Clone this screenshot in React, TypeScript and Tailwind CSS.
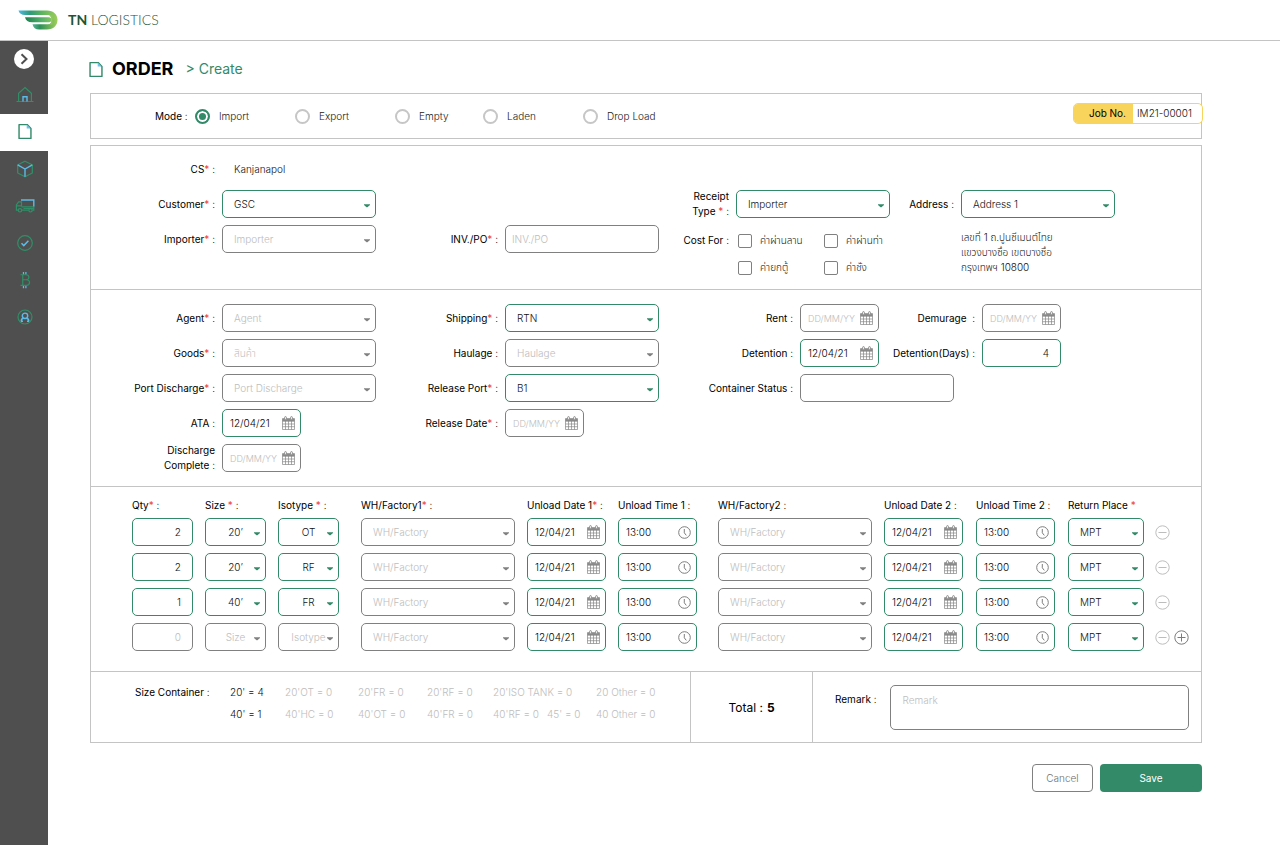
import { useId, type ReactNode } from "react";
import clsx from "clsx";

const filledBorder = "border-[#338a68]";
const emptyBorder = "border-[#808080]";

function Caret({ filled }: { filled: boolean }) {
  return (
    <svg
      viewBox="0 0 6 4"
      className={clsx(
        "pointer-events-none absolute top-[14px] right-[6px] h-1 w-1.5",
        filled ? "fill-[#338a68]" : "fill-[#808080]",
      )}
      aria-hidden="true"
    >
      <path d="M0 0.200h6v0.700L3.400 3.200h-0.800L0 0.900z" />
    </svg>
  );
}

type SelectBoxProps = { id?: string; label?: string; value?: string; placeholder?: string; centered?: boolean };

function SelectBox({ id, label, value, placeholder, centered }: SelectBoxProps) {
  const filled = value !== undefined;
  return (
    <div className="relative w-full">
      <select
        id={id}
        aria-label={label}
        className={clsx(
          "block h-7 w-full appearance-none rounded-[5px] border bg-white",
          centered ? "[text-align-last:center]" : "pr-5 pl-[11px]",
          filled ? filledBorder : emptyBorder,
          filled ? "text-[#111]" : "text-[#bdbdbd]",
        )}
      >
        <option>{value ?? placeholder}</option>
      </select>
      <Caret filled={filled} />
    </div>
  );
}

function CalendarIcon() {
  return (
    <svg viewBox="0 0 13 14" className="h-3.5 w-[13px] shrink-0" fill="none" stroke="#858585" aria-hidden="true">
      <path d="M0.500 2.200h12v3h-12z" fill="#8c8c8c" stroke="none" />
      <path d="M0.500 2.500v11h12v-11" strokeWidth="0.700" />
      <path d="M0.500 5.200h12M0.500 8h12M0.500 10.700h12M3.500 5v8.500M6.500 5v8.500M9.500 5v8.500" strokeWidth="0.700" />
      <rect x="2.600" y="0.600" width="1.800" height="3.200" rx="0.900" fill="#fff" strokeWidth="0.900" />
      <rect x="8.600" y="0.600" width="1.800" height="3.200" rx="0.900" fill="#fff" strokeWidth="0.900" />
    </svg>
  );
}

function ClockIcon() {
  return (
    <svg viewBox="0 0 13 13" className="size-[13px] shrink-0" fill="none" stroke="#7d7d7d" aria-hidden="true">
      <circle cx="6.500" cy="6.500" r="5.800" strokeWidth="1" />
      <path d="M6.300 3v3.800l2 2.600" strokeWidth="1" />
    </svg>
  );
}

function IconBox({ id, label, value, icon }: { id?: string; label?: string; value?: string; icon: "date" | "time" }) {
  return (
    <div
      className={clsx(
        "flex h-7 w-[79px] items-center rounded-[5px] border bg-white pr-[5px] pl-[7px]",
        value ? filledBorder : emptyBorder,
      )}
    >
      <input
        id={id}
        aria-label={label}
        defaultValue={value}
        placeholder={icon === "date" ? "DD/MM/YY" : "00:00"}
        className="w-full min-w-0 flex-1 text-black outline-none placeholder:text-[9px] placeholder:text-[#bdbdbd]"
      />
      {icon === "date" ? <CalendarIcon /> : <ClockIcon />}
    </div>
  );
}

type TextBoxProps = { id?: string; label?: string; value?: string; placeholder?: string; numeric?: boolean };

function TextBox({ id, label, value, placeholder, numeric }: TextBoxProps) {
  return (
    <input
      id={id}
      aria-label={label}
      defaultValue={value}
      placeholder={placeholder}
      className={clsx(
        "block h-7 w-full rounded-[5px] border bg-white text-[#111] outline-none placeholder:text-[#bdbdbd]",
        value ? filledBorder : emptyBorder,
        numeric ? "px-[11px] text-right" : "px-1.5",
      )}
    />
  );
}

function Star() {
  return <span className="text-[#f04040]">*</span>;
}

function LabelText({ children, required, spaced }: { children: ReactNode; required?: boolean; spaced?: boolean }) {
  return (
    <>
      {children}
      {spaced && "\u00a0"}
      {required && <Star />}
      <span className="font-light"> :</span>
    </>
  );
}

type FieldProps = {
  label: ReactNode;
  required?: boolean;
  short?: boolean;
  render: (id: string) => ReactNode;
};

function Field({ label, required, render }: FieldProps) {
  const id = useId();
  return (
    <div className="flex h-7 items-center gap-[7px]">
      <label htmlFor={id} className="flex-1 text-right font-normal whitespace-nowrap">
        <LabelText required={required}>{label}</LabelText>
      </label>
      <div className="w-[154px] shrink-0">{render(id)}</div>
    </div>
  );
}

function PairLabel({ id, children, required, spaced }: { id: string; children: ReactNode; required?: boolean; spaced?: boolean }) {
  return (
    <label htmlFor={id} className="text-right font-normal">
      <LabelText required={required} spaced={spaced}>{children}</LabelText>
    </label>
  );
}

function Logo() {
  return (
    <svg viewBox="0 0 40 20" className="h-5 w-10" aria-hidden="true">
      <defs>
        <linearGradient id="logoTop" gradientUnits="userSpaceOnUse" x1="0" y1="0" x2="40" y2="0">
          <stop offset="0" stopColor="#4fb9e8" />
          <stop offset="0.300" stopColor="#2f9a78" />
          <stop offset="0.600" stopColor="#5cb45e" />
          <stop offset="1" stopColor="#9fce5a" />
        </linearGradient>
        <linearGradient id="logoMid" gradientUnits="userSpaceOnUse" x1="7" y1="0" x2="40" y2="0">
          <stop offset="0" stopColor="#1c7f4e" />
          <stop offset="0.500" stopColor="#53b06a" />
          <stop offset="1" stopColor="#a5d05c" />
        </linearGradient>
        <linearGradient id="logoLow" gradientUnits="userSpaceOnUse" x1="14" y1="0" x2="40" y2="0">
          <stop offset="0" stopColor="#58b7a0" />
          <stop offset="0.300" stopColor="#2c8f58" />
          <stop offset="1" stopColor="#a5d05c" />
        </linearGradient>
      </defs>
      <path
        d="M0.500 0.500H29C35.500 0.500 39.500 4.500 39.500 10H33.500C33.500 6.500 32.500 5 30 5H7C3.500 5 1.200 3.300 0.500 0.500z"
        fill="url(#logoTop)"
      />
      <path d="M7 7.200H31c3 0 3.400 5 0 5H14C10.200 12.200 7.700 10.400 7 7.200z" fill="url(#logoMid)" />
      <path
        d="M14.500 14.300H30C32.500 14.300 33.500 13 33.500 9.800H39.500C39.500 15.500 35.500 19.500 29 19.500H21C17.500 19.500 15.200 17.800 14.500 14.300z"
        fill="url(#logoLow)"
      />
      <path d="M31 5.200c3 1 3.600 8 0 9.200h3.500V5.200z" fill="#92c85b" />
    </svg>
  );
}

function DocIcon() {
  return (
    <svg viewBox="0 0 16 18" className="h-[17px] w-4" fill="none" aria-hidden="true">
      <path d="M1.700 1.700h8.600l4 4v10.600H1.700z" stroke="#338a68" strokeWidth="1.500" strokeLinejoin="round" />
      <path d="M9.800 1.700v4h4.200z" fill="#6cc4ee" />
    </svg>
  );
}

const G = "#2f9068";
const B = "#5bbce8";

function HomeIcon() {
  return (
    <svg viewBox="0 0 18 18" className="size-[18px]" fill="none" stroke={G} strokeWidth="1.200" aria-hidden="true">
      <path d="M0.500 15.500h17M2.600 15.500V7.200L9 1.600l6.400 5.600v8.300" />
      <path d="M7 15.500v-4.700h4v4.700" stroke={B} strokeWidth="1.400" />
    </svg>
  );
}

function BoxIcon() {
  return (
    <svg viewBox="0 0 18 18" className="size-[18px]" fill="none" stroke={G} strokeWidth="1.200" aria-hidden="true">
      <path d="M9 1.200l7.300 3.600v8.200L9 16.800l-7.300-3.800V4.800z" />
      <path d="M1.700 4.800L9 9l7.300-4.200M9 9v7.800" stroke={B} strokeWidth="1.400" />
    </svg>
  );
}

function TruckIcon() {
  return (
    <svg viewBox="0 0 20 14" className="h-3.5 w-5" fill="none" stroke={G} strokeWidth="1.200" aria-hidden="true">
      <path d="M6.500 7.500V2.800H3.600L1.400 6v5.200h1.800M6.600 11.200h7M17.400 11.200h1.400V7.800H6.500M1.400 6.800h5M8.500 9.500h10" />
      <path d="M6 1h12.800v6.500" stroke={B} strokeWidth="1.400" />
      <circle cx="5" cy="11.300" r="1.700" />
      <circle cx="15.500" cy="11.300" r="1.700" />
    </svg>
  );
}

function CheckIcon() {
  return (
    <svg viewBox="0 0 18 18" className="size-[18px]" fill="none" stroke={G} strokeWidth="1.200" aria-hidden="true">
      <circle cx="9" cy="9" r="7.300" />
      <path d="M5.500 9.300l2.300 2.300 4.600-4.800" stroke={B} strokeWidth="1.500" />
    </svg>
  );
}

function CoinIcon() {
  return (
    <svg viewBox="0 0 14 20" className="h-[18px] w-3.5" fill="none" stroke={G} strokeWidth="1.300" aria-hidden="true">
      <path d="M2 4.200h6.300c4 0 4 5.500 0 5.500H4.500M8.500 9.700c4.800 0 4.600 6.300 0 6.300H2M4.500 4.200V16" />
      <path d="M5.300 1v2.600M8 1v2.600M5.300 16.600v2.600M8 16.600v2.600" stroke={B} strokeWidth="1.400" />
    </svg>
  );
}

function UserIcon() {
  return (
    <svg viewBox="0 0 18 18" className="size-[18px]" fill="none" stroke={G} strokeWidth="1.200" aria-hidden="true">
      <circle cx="9" cy="9" r="7" />
      <circle cx="9" cy="7.800" r="2.700" stroke={B} strokeWidth="1.400" />
      <path d="M5.200 13.200c0-1.800 1-2.700 2.300-2.900M12.800 13.200c0-1.800-1-2.700-2.300-2.900M5 13.200h2M11 13.200h2" stroke={B} strokeWidth="1.400" />
    </svg>
  );
}

const nav = [
  { name: "Home", icon: <HomeIcon /> },
  { name: "Order", icon: <DocIcon />, active: true },
  { name: "Products", icon: <BoxIcon /> },
  { name: "Transport", icon: <TruckIcon /> },
  { name: "Approve", icon: <CheckIcon /> },
  { name: "Billing", icon: <CoinIcon /> },
  { name: "Account", icon: <UserIcon /> },
];

function Sidebar() {
  return (
    <nav className="flex w-12 shrink-0 flex-col bg-[#4f4f4f]">
      <div className="flex h-9 items-center justify-center">
        <button type="button" aria-label="Expand menu" className="flex size-5 items-center justify-center rounded-full bg-white">
          <svg viewBox="0 0 20 20" className="size-5" fill="none" stroke="#4f4f4f" strokeWidth="2" aria-hidden="true">
            <path d="M7.500 5.200l5 4.800-5 4.800" />
          </svg>
        </button>
      </div>
      {nav.map((item) => (
        <a
          key={item.name}
          href="#"
          aria-label={item.name}
          className={clsx("flex h-[37px] items-center justify-center pb-0.5 pl-px", item.active && "bg-white")}
        >
          {item.icon}
        </a>
      ))}
    </nav>
  );
}

const modes = ["Import", "Export", "Empty", "Laden", "Drop Load"];

function ModePanel() {
  return (
    <div className="flex h-[46px] items-center border border-[#c4c4c4] pl-16">
      <span id="mode-label" className="w-10 font-normal">
        <LabelText>Mode</LabelText>
      </span>
      <div role="radiogroup" aria-labelledby="mode-label" className="flex flex-1">
        {modes.map((mode) => (
          <label
            key={mode}
            className={clsx("flex items-center gap-[9px] text-[#222]", mode === "Empty" ? "w-[88px]" : "w-[100px]")}
          >
            <input
              type="radio"
              name="mode"
              defaultChecked={mode === "Import"}
              className="size-[15px] appearance-none rounded-full border-2 border-[#c6c6c6] checked:border-[#338a68] checked:bg-[#338a68] checked:shadow-[inset_0_0_0_2px_white]"
            />
            {mode}
          </label>
        ))}
      </div>
      <div className="mt-[9px] -mr-0.5 flex h-[21px] w-[130px] self-start overflow-hidden rounded-[5px] border border-[#f9d45c] bg-white">
        <span className="flex w-[59px] items-center justify-end bg-[#f9d45c] pr-[7px] font-normal">Job No.</span>
        <span className="flex flex-1 items-center pl-1 text-[#111]">IM21-00001</span>
      </div>
    </div>
  );
}

const costs = ["ค่าผ่านลาน", "ค่าผ่านท่า", "ค่ายกตู้", "ค่าชั่ง"];

function CustomerSection() {
  return (
    <section className="grid h-36 grid-cols-[285fr_283fr_542fr] items-start border-b border-[#c4c4c4] pt-[9px]">
      <div className="flex flex-col gap-[7px]">
        <Field label="CS" required render={(id) => <output id={id} className="block pl-3 text-[#111]">Kanjanapol</output>} />
        <Field label="Customer" required render={(id) => <SelectBox id={id} value="GSC" />} />
        <Field label="Importer" required render={(id) => <SelectBox id={id} placeholder="Importer" />} />
      </div>
      <div className="pt-[70px]">
        <Field label="INV./PO" required render={(id) => <TextBox id={id} placeholder="INV./PO" />} />
      </div>
      <div className="grid grid-cols-[70px_154px_57px_154px] items-center gap-x-[7px] pt-[34px]">
        <PairLabel id="receipt" required spaced>
          Receipt
          <br />
          Type
        </PairLabel>
        <SelectBox id="receipt" value="Importer" />
        <PairLabel id="address">Address</PairLabel>
        <SelectBox id="address" value="Address 1" />
        <span id="cost-label" className="self-start pt-3.5 text-right font-normal">
          <LabelText>Cost For</LabelText>
        </span>
        <div
          role="group"
          aria-labelledby="cost-label"
          className="col-span-2 grid grid-cols-[86px_1fr] gap-y-3 self-start pt-3.5 pl-0.5"
        >
          {costs.map((cost) => (
            <label key={cost} className="flex items-center gap-2 text-[#111]">
              <input
                type="checkbox"
                className="size-3.5 appearance-none rounded-[2px] border border-[#808080] checked:bg-[#338a68]"
              />
              {cost}
            </label>
          ))}
        </div>
        <address className="self-start pt-[11px] text-[#111] not-italic">
          เลขที่ 1 ถ.ปูนซีเมนต์ไทย
          <br />
          แขวงบางซื่อ เขตบางซื่อ
          <br />
          กรุงเทพฯ 10800
        </address>
      </div>
    </section>
  );
}

function ShipmentSection() {
  return (
    <section className="grid h-[197px] grid-cols-[285fr_283fr_542fr] items-start border-b border-[#c4c4c4] pt-3.5">
      <div className="flex flex-col gap-[7px]">
        <Field label="Agent" required render={(id) => <SelectBox id={id} placeholder="Agent" />} />
        <Field label="Goods" required render={(id) => <SelectBox id={id} placeholder="สินค้า" />} />
        <Field label="Port Discharge" required render={(id) => <SelectBox id={id} placeholder="Port Discharge" />} />
        <Field label="ATA" render={(id) => <IconBox id={id} icon="date" value="12/04/21" />} />
        <Field
          label={
            <>
              Discharge
              <br />
              Complete
            </>
          }
          render={(id) => <IconBox id={id} icon="date" />}
        />
      </div>
      <div className="flex flex-col gap-[7px]">
        <Field label="Shipping" required render={(id) => <SelectBox id={id} value="RTN" />} />
        <Field label="Haulage" render={(id) => <SelectBox id={id} placeholder="Haulage" />} />
        <Field label="Release Port" required render={(id) => <SelectBox id={id} value="B1" />} />
        <Field label="Release Date" required render={(id) => <IconBox id={id} icon="date" />} />
      </div>
      <div className="grid grid-cols-[134px_79px_89px_79px] items-center gap-[7px]">
        <PairLabel id="rent">Rent</PairLabel>
        <IconBox id="rent" icon="date" />
        <PairLabel id="demurage" spaced>Demurage</PairLabel>
        <IconBox id="demurage" icon="date" />
        <PairLabel id="detention">Detention</PairLabel>
        <IconBox id="detention" icon="date" value="12/04/21" />
        <PairLabel id="detention-days">Detention(Days)</PairLabel>
        <TextBox id="detention-days" value="4" numeric />
        <PairLabel id="status">Container Status</PairLabel>
        <div className="col-span-3 w-[154px]">
          <TextBox id="status" />
        </div>
      </div>
    </section>
  );
}

const rows: { qty?: string; size?: string; iso?: string }[] = [
  { qty: "2", size: "20’", iso: "OT" },
  { qty: "2", size: "20’", iso: "RF" },
  { qty: "1", size: "40’", iso: "FR" },
  {},
];

function RoundIcon({ plus }: { plus?: boolean }) {
  return (
    <svg viewBox="0 0 15 15" className="size-[15px]" fill="none" stroke={plus ? "#7a7a7a" : "#bdbdbd"} aria-hidden="true">
      <circle cx="7.500" cy="7.500" r="6.700" />
      <path d={plus ? "M3.500 7.500h8M7.500 3.500v8" : "M3.500 7.500h8"} />
    </svg>
  );
}

function ContainerTable() {
  return (
    <section className="h-[185px] border-b border-[#c4c4c4] pt-1.5 pl-[41px]">
      <table className="w-full table-fixed text-left">
        <colgroup>
          <col className="w-[73px]" />
          <col className="w-[73px]" />
          <col className="w-[83px]" />
          <col />
          <col className="w-[91px]" />
          <col className="w-[100px]" />
          <col />
          <col className="w-[92px]" />
          <col className="w-[92px]" />
          <col className="w-[87px]" />
          <col className="w-[46px]" />
        </colgroup>
        <thead>
          <tr className="h-[25px] whitespace-nowrap [&>th]:p-0 [&>th]:font-normal">
            <th><LabelText required>Qty</LabelText></th>
            <th><LabelText required spaced>Size</LabelText></th>
            <th><LabelText required spaced>Isotype</LabelText></th>
            <th><LabelText required>WH/Factory1</LabelText></th>
            <th><LabelText required>Unload Date 1</LabelText></th>
            <th><LabelText>Unload Time 1</LabelText></th>
            <th><LabelText>WH/Factory2</LabelText></th>
            <th><LabelText>Unload Date 2</LabelText></th>
            <th><LabelText>Unload Time 2</LabelText></th>
            <th>Return Place <Star /></th>
            <td />
          </tr>
        </thead>
        <tbody>
          {rows.map((row, i) => (
            <tr key={i} className="h-[35px] align-top [&>td]:p-0 [&>td]:pr-3">
              <td><TextBox label="Qty" value={row.qty} placeholder="0" numeric /></td>
              <td><SelectBox label="Size" value={row.size} placeholder="Size" centered /></td>
              <td><div className="w-[61px]"><SelectBox label="Isotype" value={row.iso} placeholder="Isotype" centered /></div></td>
              <td><SelectBox label="WH/Factory 1" placeholder="WH/Factory" /></td>
              <td><IconBox label="Unload Date 1" icon="date" value="12/04/21" /></td>
              <td><IconBox label="Unload Time 1" icon="time" value="13:00" /></td>
              <td><SelectBox label="WH/Factory 2" placeholder="WH/Factory" /></td>
              <td><IconBox label="Unload Date 2" icon="date" value="12/04/21" /></td>
              <td><IconBox label="Unload Time 2" icon="time" value="13:00" /></td>
              <td><div className="w-[76px]"><SelectBox label="Return Place" value="MPT" /></div></td>
              <td>
                <div className="flex h-7 items-center gap-1">
                  <button type="button" aria-label="Remove row"><RoundIcon /></button>
                  {i === rows.length - 1 && (
                    <button type="button" aria-label="Add row"><RoundIcon plus /></button>
                  )}
                </div>
              </td>
            </tr>
          ))}
        </tbody>
      </table>
    </section>
  );
}

function Summary() {
  return (
    <section className="grid h-[70px] grid-cols-[600fr_122fr_388fr]">
      <div className="grid grid-cols-[95fr_55fr_73fr_69fr_66fr_103fr_94fr] content-start gap-y-[7px] border-r border-[#c4c4c4] pt-[13px] pl-11 whitespace-nowrap text-[#bdbdbd]">
        <span className="font-normal text-black"><LabelText>Size Container</LabelText></span>
        <span className="text-[#111]">20' = 4</span>
        <span>20'OT = 0</span>
        <span>20'FR = 0</span>
        <span>20'RF = 0</span>
        <span>20'ISO TANK = 0</span>
        <span>20 Other = 0</span>
        <span />
        <span className="text-[#111]">40' = 1</span>
        <span>40'HC = 0</span>
        <span>40'OT = 0</span>
        <span>40'FR = 0</span>
        <span className="flex gap-2"><span>40'RF = 0</span><span>45' = 0</span></span>
        <span>40 Other = 0</span>
      </div>
      <div className="flex items-center justify-center gap-1 border-r border-[#c4c4c4] text-xs font-normal">
        Total : <strong className="font-bold">5</strong>
      </div>
      <div className="flex items-start gap-[13px] py-[13px] pr-3 pl-[22px]">
        <label htmlFor="remark" className="pt-[7px] font-normal whitespace-nowrap"><LabelText>Remark</LabelText></label>
        <textarea
          id="remark"
          placeholder="Remark"
          className="h-[45px] min-w-0 flex-1 resize-none rounded-[5px] border border-[#808080] px-3 py-[7px] outline-none placeholder:text-[#bdbdbd]"
        />
      </div>
    </section>
  );
}

export default function App() {
  return (
    <div className="flex min-h-screen flex-col bg-white font-[Inter,'Noto_Sans_Thai','Noto_Sans',sans-serif] text-[10px] leading-[15px] font-light text-black">
      <header className="flex h-[41px] items-center gap-2.5 border-b border-[#c4c4c4] pl-[18px]">
        <Logo />
        <span className="font-[Lato,sans-serif] text-sm text-[#1f5436]">
          <b className="font-bold">TN</b> LOGISTICS
        </span>
      </header>
      <div className="flex flex-1">
        <Sidebar />
        <main className="min-w-0 flex-1 pr-[78px] pl-[42px]">
          <div className="-ml-0.5 flex h-[52px] items-center gap-2 pt-1">
            <DocIcon />
            <h1 className="text-lg font-bold">ORDER</h1>
            <p className="pl-1 text-sm font-normal text-[#338a68]">&gt; Create</p>
          </div>
          <form className="flex flex-col" onSubmit={(e) => e.preventDefault()}>
            <ModePanel />
            <div className="mt-1.5 border border-[#c4c4c4]">
              <CustomerSection />
              <ShipmentSection />
              <ContainerTable />
              <Summary />
            </div>
            <div className="mt-[21px] flex justify-end gap-[7px]">
              <button type="button" className="h-7 w-[61px] rounded-[4px] border border-[#808080] text-[#707070]">Cancel</button>
              <button type="submit" className="h-7 w-[102px] rounded-[4px] bg-[#338a68] font-normal text-white">Save</button>
            </div>
          </form>
        </main>
      </div>
    </div>
  );
}
